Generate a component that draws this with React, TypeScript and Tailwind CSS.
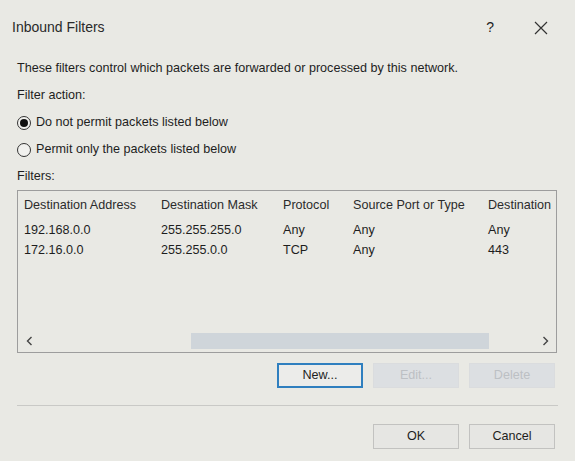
import React from "react";

const columns = [
  { label: "Destination Address", width: "w-[137px]" },
  { label: "Destination Mask", width: "w-[122px]" },
  { label: "Protocol", width: "w-[70px]" },
  { label: "Source Port or Type", width: "w-[135px]" },
  { label: "Destination", width: "flex-1" },
];

const filters = [
  ["192.168.0.0", "255.255.255.0", "Any", "Any", "Any"],
  ["172.16.0.0", "255.255.0.0", "TCP", "Any", "443"],
];

function Radio({ checked, label }: { checked: boolean; label: string }) {
  return (
    <label className="flex items-center gap-[5px] h-[27px]">
      <span className="w-[14px] h-[14px] rounded-full border border-[#333] flex items-center justify-center bg-[#f1f1ee]">
        {checked && <span className="w-[8px] h-[8px] rounded-full bg-[#111]" />}
      </span>
      <span>{label}</span>
    </label>
  );
}

export default function App() {
  return (
    <div className="w-[575px] h-[461px] bg-[#e9e9e4] text-[#1e1e1e] text-[12.6px] font-['Liberation_Sans',Arial,sans-serif] overflow-hidden">
      {/* title bar */}
      <div className="h-[55px] flex items-center pl-[12px] pr-[27px]">
        <span className="text-[14px] text-[#2a2a2a]">Inbound Filters</span>
        <span className="ml-auto mr-[40px] text-[14px]">?</span>
        <svg width="14" height="14" viewBox="0 0 14 14" className="text-[#333]">
          <path d="M1 1L13 13M13 1L1 13" stroke="currentColor" strokeWidth="1.2" />
        </svg>
      </div>

      <div className="px-[17px]">
        <div className="h-[27px] leading-[27px]">
          These filters control which packets are forwarded or processed by this network.
        </div>
        <div className="h-[27px] leading-[27px]">Filter action:</div>
        <Radio checked label="Do not permit packets listed below" />
        <Radio checked={false} label="Permit only the packets listed below" />
        <div className="h-[27px] leading-[27px]">Filters:</div>

        {/* list view */}
        <div className="w-[540px] h-[163px] border border-[#9d9d9d] flex flex-col">
          <div className="flex pl-[6px] pt-[5px] h-[29px] text-[#2b2b2b]">
            {columns.map((c) => (
              <div key={c.label} className={`${c.width} whitespace-nowrap`}>
                {c.label}
              </div>
            ))}
          </div>
          {filters.map((row, i) => (
            <div key={i} className="flex pl-[6px] h-[20px] items-center">
              {row.map((cell, j) => (
                <div key={j} className={`${columns[j].width} whitespace-nowrap`}>
                  {cell}
                </div>
              ))}
            </div>
          ))}
          <div className="mt-auto h-[17px] mb-[3px] flex items-center pl-[8px] pr-[7px] text-[#444]">
            <svg width="7" height="10" viewBox="0 0 7 10" className="w-[7px]">
              <path d="M5.5 1L1.5 5L5.5 9" fill="none" stroke="currentColor" strokeWidth="1.4" />
            </svg>
            <div className="ml-[158px] w-[298px] h-[16px] bg-[#cfd5da]" />
            <svg width="7" height="10" viewBox="0 0 7 10" className="ml-auto">
              <path d="M1.5 1L5.5 5L1.5 9" fill="none" stroke="currentColor" strokeWidth="1.4" />
            </svg>
          </div>
        </div>

        {/* action buttons */}
        <div className="flex justify-end gap-[10px] mt-[10px] pr-[3px]">
          <button className="w-[86px] h-[25px] border-2 border-[#2f7fbf] bg-[#ececea]">New...</button>
          <button className="w-[86px] h-[25px] border border-[#dadcde] bg-[#dcdfe2] text-[#bcc0c4]">Edit...</button>
          <button className="w-[86px] h-[25px] border border-[#dadcde] bg-[#dcdfe2] text-[#bcc0c4]">Delete</button>
        </div>

        <div className="mt-[17px] h-px bg-[#c9c9c6]" />

        <div className="flex justify-end gap-[10px] mt-[18px] pr-[3px]">
          <button className="w-[86px] h-[25px] border border-[#c2c2c0] bg-[#e6e6e3]">OK</button>
          <button className="w-[86px] h-[25px] border border-[#c2c2c0] bg-[#e6e6e3]">Cancel</button>
        </div>
      </div>
    </div>
  );
}
